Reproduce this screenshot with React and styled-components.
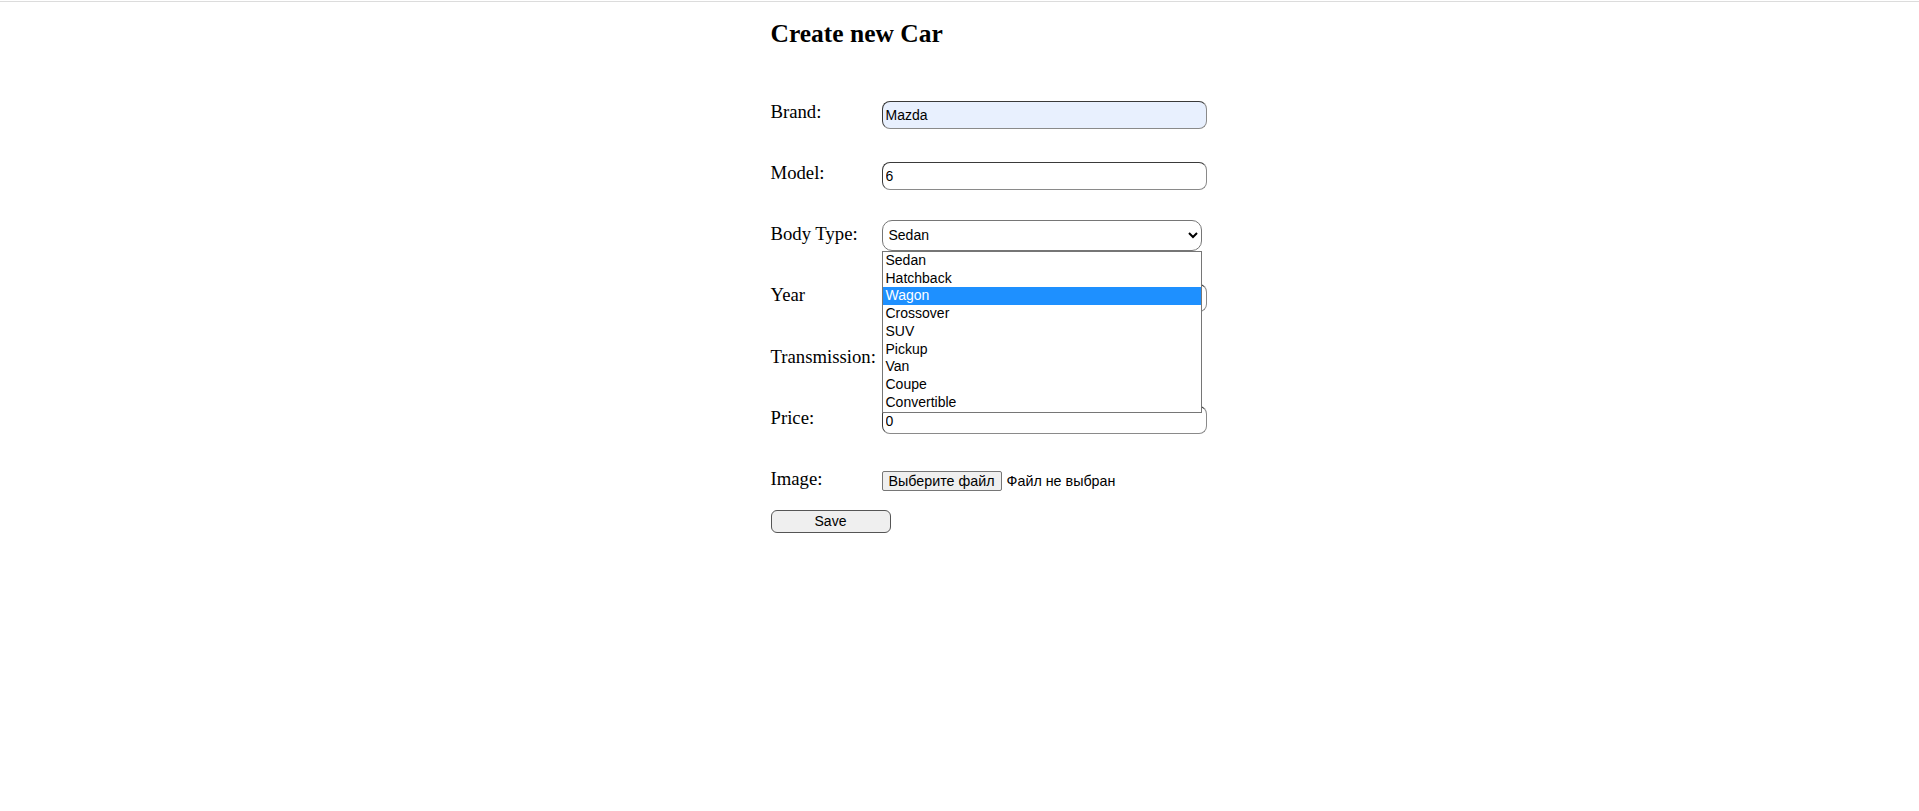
import styled, { createGlobalStyle } from "styled-components";

const GlobalStyle = createGlobalStyle`
  body {
    margin: 0;
    background: #fff;
    font-family: "Liberation Serif", "Times New Roman", serif;
    color: #000;
  }
`;

const bodyTypes = [
  "Sedan",
  "Hatchback",
  "Wagon",
  "Crossover",
  "SUV",
  "Pickup",
  "Van",
  "Coupe",
  "Convertible",
];

export default function App() {
  return (
    <>
      <GlobalStyle />
      <TopLine />
      <Page>
        <Title>Create new Car</Title>
        <Form onSubmit={(e) => e.preventDefault()}>
          <Row>
            <Label>Brand:</Label>
            <TextInput $autofill defaultValue="Mazda" />
          </Row>
          <Row>
            <Label>Model:</Label>
            <TextInput defaultValue="6" />
          </Row>
          <Row>
            <Label>Body Type:</Label>
            <SelectWrap>
              <Select defaultValue="Sedan">
                {bodyTypes.map((t) => (
                  <option key={t}>{t}</option>
                ))}
              </Select>
              <OptionList>
                {bodyTypes.map((t) => (
                  <OptionItem key={t} $active={t === "Wagon"}>
                    {t}
                  </OptionItem>
                ))}
              </OptionList>
            </SelectWrap>
          </Row>
          <Row>
            <Label>Year</Label>
            <TextInput defaultValue="" />
          </Row>
          <Row>
            <Label>Transmission:</Label>
            <SelectWrap>
              <Select defaultValue="Manual">
                <option>Manual</option>
                <option>Automatic</option>
              </Select>
            </SelectWrap>
          </Row>
          <Row>
            <Label>Price:</Label>
            <TextInput defaultValue="0" />
          </Row>
          <Row $h={51}>
            <Label>Image:</Label>
            <FilePicker>
              <FileButton type="button">Выберите файл</FileButton>
              <FileStatus>Файл не выбран</FileStatus>
            </FilePicker>
          </Row>
          <SaveButton type="submit">Save</SaveButton>
        </Form>
      </Page>
    </>
  );
}

const TopLine = styled.div`
  height: 1px;
  margin-top: 1px;
  background: #dcdcdc;
`;

const Page = styled.div`
  width: 378px;
  margin: 0 auto;
`;

const Title = styled.h2`
  margin: 17px 0 0;
  font-size: 25.5px;
  line-height: 29px;
  font-weight: bold;
`;

const Form = styled.form`
  margin-top: 44px;
  display: flex;
  flex-direction: column;
  align-items: flex-start;
`;

const Row = styled.div`
  display: flex;
  align-items: flex-start;
  height: ${(p) => (p.$h ? `${p.$h}px` : "61.17px")};
`;

const Label = styled.label`
  width: 111px;
  flex-shrink: 0;
  font-size: 18.72px;
  line-height: 40px;
  white-space: nowrap;
`;

const TextInput = styled.input`
  box-sizing: border-box;
  flex-shrink: 0;
  width: 325px;
  height: 28px;
  margin: 8.7px 0 0;
  padding: 1px 3px 0;
  border-width: 1px;
  border-style: solid;
  border-color: #3a3a3a #8a8a8a #8a8a8a #3a3a3a;
  border-radius: 8px;
  background: ${(p) => (p.$autofill ? "#e8f0fe" : "#fff")};
  font-family: "Liberation Sans", Arial, sans-serif;
  font-size: 14px;
  color: #000;
  outline: none;
`;

const SelectWrap = styled.div`
  position: relative;
  display: flex;
  flex-shrink: 0;
  margin-top: 5.5px;
`;

const Select = styled.select`
  box-sizing: border-box;
  width: 320px;
  height: 31px;
  margin: 0;
  padding: 0 2px;
  border: 1px solid #767676;
  border-radius: 10px;
  background: #fff;
  font-family: "Liberation Sans", Arial, sans-serif;
  font-size: 14px;
  color: #000;
  outline: none;
`;

const OptionList = styled.ul`
  position: absolute;
  top: 100%;
  left: 0;
  z-index: 10;
  box-sizing: border-box;
  width: 320px;
  margin: 0;
  padding: 0;
  list-style: none;
  background: #fff;
  border: 1px solid #767676;
`;

const OptionItem = styled.li`
  height: 17.78px;
  line-height: 17.78px;
  padding-left: 3px;
  font-family: "Liberation Sans", Arial, sans-serif;
  font-size: 14px;
  background: ${(p) => (p.$active ? "#1e90ff" : "#fff")};
  color: ${(p) => (p.$active ? "#fff" : "#000")};
`;

const FilePicker = styled.div`
  display: flex;
  align-items: baseline;
  margin-top: 12px;
  font-family: "Liberation Sans", Arial, sans-serif;
  font-size: 14.3px;
`;

const FileButton = styled.button`
  box-sizing: border-box;
  flex-shrink: 0;
  height: 20px;
  margin: 0;
  padding: 1px 6px;
  border: 1px solid #767676;
  border-radius: 2px;
  background: #efefef;
  font: inherit;
  line-height: 16px;
  color: #000;
`;

const FileStatus = styled.span`
  margin-left: 5px;
  white-space: nowrap;
`;

const SaveButton = styled.button`
  box-sizing: border-box;
  width: 120px;
  height: 23px;
  margin: 0;
  border: 1px solid #555;
  border-radius: 6px;
  background: #efefef;
  font-family: "Liberation Sans", Arial, sans-serif;
  font-size: 14px;
  color: #000;
`;
